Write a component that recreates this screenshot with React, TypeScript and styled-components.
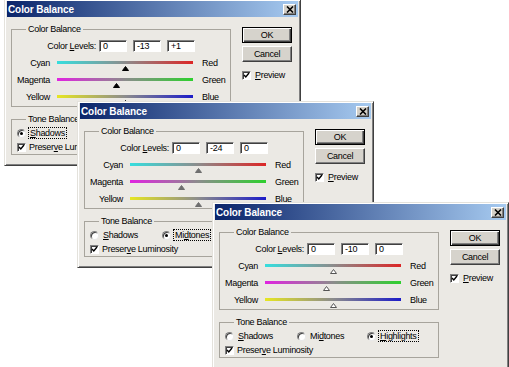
import { Fragment, type ReactNode } from 'react';
import styled, { createGlobalStyle } from 'styled-components';

const GlobalStyle = createGlobalStyle`
  html, body {
    margin: 0;
    padding: 0;
    background: #fff;
  }
  body {
    font-family: "Liberation Sans", Arial, sans-serif;
    font-size: 9px;
    letter-spacing: -0.3px;
    color: #000;
  }
`;

const Desktop = styled.div`
  position: relative;
  width: 509px;
  height: 367px;
  overflow: hidden;
  background: #fff;
`;

const Dialog = styled.div<{ $x: number; $y: number }>`
  position: absolute;
  left: ${p => p.$x}px;
  top: ${p => p.$y}px;
  width: 297px;
  height: 167px;
  box-sizing: border-box;
  display: flex;
  flex-direction: column;
  padding: 1px 2px 2px;
  background: #ebe9e4;
  border: 1px solid;
  border-color: #e4e2dc #404040 #404040 #e4e2dc;
  box-shadow: inset 1px 1px #fff, inset -1px -1px #808080;
`;

const TitleBar = styled.div`
  flex: none;
  height: 16px;
  display: flex;
  align-items: center;
  justify-content: space-between;
  padding: 0 2px 0 1px;
  background: linear-gradient(to right, #0a246a, #a6caf0);
  color: #fff;
  font-weight: bold;
  font-size: 10px;
  letter-spacing: -0.1px;
`;

const CloseBtn = styled.div`
  width: 13px;
  height: 11px;
  box-sizing: border-box;
  background: #d4d0c8;
  border: 1px solid;
  border-color: #fff #404040 #404040 #fff;
  box-shadow: inset -1px -1px #808080;
  display: flex;
  align-items: center;
  justify-content: center;
`;

const Body = styled.div`
  display: flex;
  gap: 11px;
  padding: 7px 0 0 4px;
`;

const LeftCol = styled.div`
  width: 220px;
  display: flex;
  flex-direction: column;
`;

const Group = styled.fieldset<{ $gapTop?: number }>`
  margin: ${p => p.$gapTop ?? 0}px 0 0;
  padding: 0 5px 0;
  border: 1px solid #a7a49c;
  min-width: 0;
`;

const Legend = styled.legend`
  padding: 0 2px;
  margin-left: 9px;
  line-height: 11px;
`;

const LevelsRow = styled.div`
  display: flex;
  align-items: center;
  height: 12px;
  margin-top: 5px;
`;

const LevelsLabel = styled.span`
  width: 79px;
  margin-right: 3px;
  text-align: right;
`;

const NumBox = styled.input`
  width: 28px;
  height: 12px;
  box-sizing: border-box;
  margin: 0 6px 0 0;
  padding: 0 0 0 3px;
  font: inherit;
  letter-spacing: inherit;
  background: #fff;
  border: 1px solid;
  border-color: #808080 #fff #fff #808080;
  box-shadow: inset 1px 1px #404040;
  outline: none;
`;

const Sliders = styled.div`
  margin-top: 3px;
  display: grid;
  grid-template-columns: 33px 136px auto;
  grid-auto-rows: 17px;
  column-gap: 7px;
  align-items: center;
`;

const SideLabel = styled.span<{ $end?: boolean }>`
  text-align: ${p => (p.$end ? 'left' : 'right')};
  padding-left: ${p => (p.$end ? 2 : 0)}px;
  line-height: 17px;
`;

const Track = styled.div`
  position: relative;
  height: 17px;
`;

const Bar = styled.div<{ $stops: string }>`
  height: 3px;
  margin-top: 6px;
  background: linear-gradient(to right, ${p => p.$stops});
`;

const Thumb = styled.svg`
  position: absolute;
  top: 11px;
  display: block;
`;

const RadioRow = styled.div`
  display: grid;
  grid-template-columns: 72px 70px 1fr;
  height: 12px;
  margin-top: 2px;
  align-items: center;
`;

const Option = styled.label`
  display: flex;
  align-items: center;
  gap: 3px;
  white-space: nowrap;
`;

const RadioDot = styled.span<{ $on: boolean }>`
  width: 9px;
  height: 9px;
  box-sizing: border-box;
  border-radius: 50%;
  background: #fff;
  border: 1px solid;
  border-color: #808080 #e8e8e8 #e8e8e8 #808080;
  box-shadow: inset 1px 1px #404040;
  display: flex;
  align-items: center;
  justify-content: center;

  &::after {
    content: '';
    width: 3px;
    height: 3px;
    border-radius: 50%;
    background: #000;
    display: ${p => (p.$on ? 'block' : 'none')};
  }
`;

const OptText = styled.span<{ $focus: boolean }>`
  line-height: 10px;
  padding: 0 1px;
  outline: ${p => (p.$focus ? '1px dotted #000' : 'none')};
`;

const CheckRow = styled.label<{ $gapTop: number }>`
  display: flex;
  align-items: center;
  gap: 3px;
  height: 12px;
  margin-top: ${p => p.$gapTop}px;
  margin-bottom: 1px;
  white-space: nowrap;
`;

const CheckBox = styled.span`
  width: 9px;
  height: 9px;
  box-sizing: border-box;
  background: #fff;
  border: 1px solid;
  border-color: #808080 #fff #fff #808080;
  box-shadow: inset 1px 1px #404040;
  display: flex;
  align-items: center;
  justify-content: center;
  flex: none;
`;

const RightCol = styled.div`
  width: 50px;
  display: flex;
  flex-direction: column;
  padding-top: 3px;
`;

const Button = styled.div<{ $default?: boolean }>`
  height: 16px;
  box-sizing: border-box;
  margin-bottom: 3px;
  display: flex;
  align-items: center;
  justify-content: center;
  background: #d6d3cc;
  border: 1px solid;
  border-color: ${p => (p.$default ? '#000' : '#fff #404040 #404040 #fff')};
  box-shadow: ${p =>
    p.$default
      ? 'inset 1px 1px #fff, inset -1px -1px #404040, inset -2px -2px #808080'
      : 'inset -1px -1px #808080'};
`;

const PreviewRow = styled.label`
  display: flex;
  align-items: center;
  gap: 4px;
  margin-top: 5px;
  height: 10px;
`;

type Tone = 'shadows' | 'midtones' | 'highlights';
type ThumbKind = 'solid' | 'dim' | 'hollow';

const sliders = [
  { left: 'Cyan', right: 'Red', stops: '#36dede, #8c8c8c 50%, #dc2626' },
  { left: 'Magenta', right: 'Green', stops: '#e024e0, #8c8c8c 50%, #2ed02e' },
  { left: 'Yellow', right: 'Blue', stops: '#e6e622, #8c8c8c 50%, #1c1cc8' },
];

const dialogs: { x: number; y: number; levels: string[]; tone: Tone; thumb: ThumbKind }[] = [
  { x: 4, y: -1, levels: ['0', '-13', '+1'], tone: 'shadows', thumb: 'solid' },
  { x: 77, y: 101, levels: ['0', '-24', '0'], tone: 'midtones', thumb: 'dim' },
  { x: 212, y: 202, levels: ['0', '-10', '0'], tone: 'highlights', thumb: 'hollow' },
];

const CloseIcon = () => (
  <svg width="8" height="7" viewBox="0 0 8 7">
    <path d="M1 0.5 L7 6.5 M7 0.5 L1 6.5" stroke="#000" strokeWidth="1.6" />
  </svg>
);

const CheckMark = () => (
  <svg width="7" height="7" viewBox="0 0 7 7">
    <path d="M1 3 L2.8 5 L6 1" stroke="#000" strokeWidth="1.4" fill="none" />
  </svg>
);

const SliderThumb = ({ value, kind }: { value: number; kind: ThumbKind }) => {
  const left = 68 + value * 0.68 - 3.5;
  const fill = kind === 'solid' ? '#000' : kind === 'dim' ? '#6e6e6e' : '#fff';
  const stroke = kind === 'hollow' ? '#555' : fill;
  return (
    <Thumb width="7" height="5" viewBox="0 0 7 5" style={{ left }}>
      <polygon points="3.5,0.5 6.5,4.5 0.5,4.5" fill={fill} stroke={stroke} strokeWidth="1" />
    </Thumb>
  );
};

const ColorBalanceDialog = ({ x, y, levels, tone, thumb }: (typeof dialogs)[number]) => {
  const values = levels.map(v => parseInt(v, 10));
  const tones: { id: Tone; node: ReactNode }[] = [
    { id: 'shadows', node: <><u>S</u>hadows</> },
    { id: 'midtones', node: <>Mi<u>d</u>tones</> },
    { id: 'highlights', node: <><u>H</u>ighlights</> },
  ];

  return (
    <Dialog $x={x} $y={y}>
      <TitleBar>
        <span>Color Balance</span>
        <CloseBtn>
          <CloseIcon />
        </CloseBtn>
      </TitleBar>
      <Body>
        <LeftCol>
          <Group>
            <Legend>Color Balance</Legend>
            <LevelsRow>
              <LevelsLabel>
                Color <u>L</u>evels:
              </LevelsLabel>
              {levels.map((v, i) => (
                <NumBox key={i} readOnly value={v} />
              ))}
            </LevelsRow>
            <Sliders>
              {sliders.map((s, i) => (
                <Fragment key={s.left}>
                  <SideLabel>{s.left}</SideLabel>
                  <Track>
                    <Bar $stops={s.stops} />
                    <SliderThumb value={values[i]} kind={thumb} />
                  </Track>
                  <SideLabel $end>{s.right}</SideLabel>
                </Fragment>
              ))}
            </Sliders>
          </Group>
          <Group $gapTop={7}>
            <Legend>Tone Balance</Legend>
            <RadioRow>
              {tones.map(t => (
                <Option key={t.id}>
                  <RadioDot $on={t.id === tone} />
                  <OptText $focus={t.id === tone}>{t.node}</OptText>
                </Option>
              ))}
            </RadioRow>
            <CheckRow $gapTop={2}>
              <CheckBox>
                <CheckMark />
              </CheckBox>
              <span>
                Preser<u>v</u>e Luminosity
              </span>
            </CheckRow>
          </Group>
        </LeftCol>
        <RightCol>
          <Button $default>OK</Button>
          <Button>Cancel</Button>
          <PreviewRow>
            <CheckBox>
              <CheckMark />
            </CheckBox>
            <span>
              <u>P</u>review
            </span>
          </PreviewRow>
        </RightCol>
      </Body>
    </Dialog>
  );
};

export default function App() {
  return (
    <>
      <GlobalStyle />
      <Desktop>
        {dialogs.map(d => (
          <ColorBalanceDialog key={d.x} {...d} />
        ))}
      </Desktop>
    </>
  );
}
